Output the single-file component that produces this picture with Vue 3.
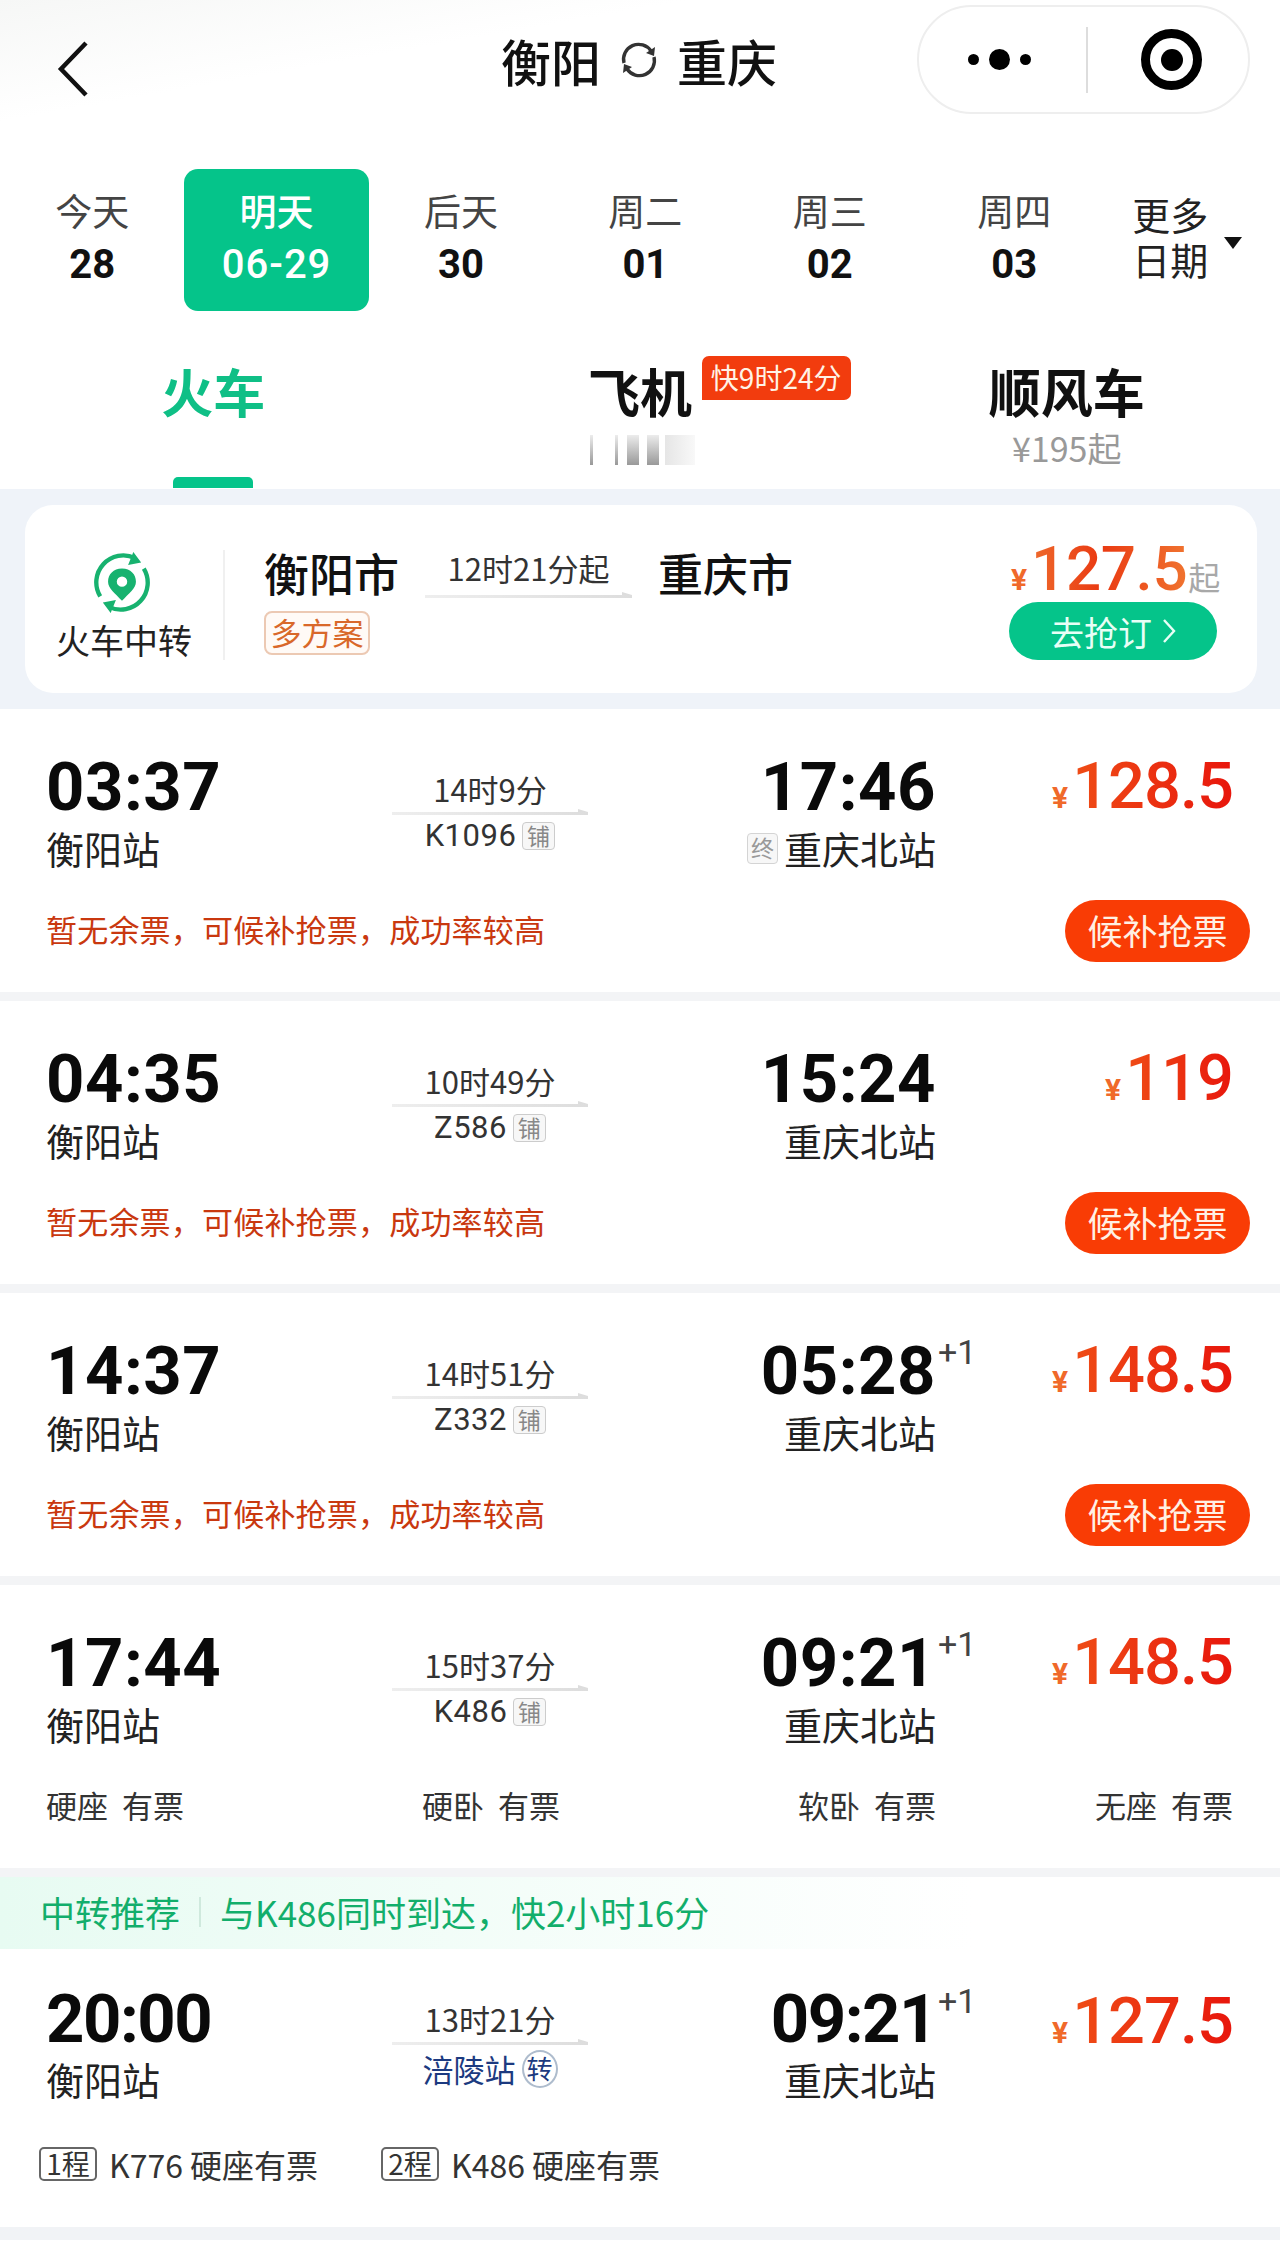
<template>
  <div class="page">
    <header class="nav">
      <svg class="back" width="36" height="58" viewBox="0 0 36 58">
        <path d="M31 3 L6 29 L31 55" fill="none" stroke="#111" stroke-width="4.5" />
      </svg>
      <div class="title">
        <span>衡阳</span>
        <svg width="40" height="40" viewBox="0 0 40 40">
          <path d="M5 23 A15 15 0 0 1 32 11" fill="none" stroke="#333" stroke-width="3.4" />
          <path d="M35 17 A15 15 0 0 1 8 29" fill="none" stroke="#333" stroke-width="3.4" />
          <path d="M36 7 L35 16 L27 13 Z M4 33 L5 24 L13 27 Z" fill="#333" />
        </svg>
        <span>重庆</span>
      </div>
      <div class="capsule">
        <div class="capsule-part dots">
          <i class="dot"></i><i class="dot big"></i><i class="dot"></i>
        </div>
        <div class="capsule-line"></div>
        <div class="capsule-part">
          <div class="target"><i></i></div>
        </div>
      </div>
    </header>

    <section class="dates">
      <div v-for="d in dates" :key="d.label" class="date" :class="{ active: d.active }">
        <div class="date-label">{{ d.label }}</div>
        <div class="date-num">{{ d.num }}</div>
      </div>
      <div class="more">
        <div>更多<br />日期</div>
        <i class="caret"></i>
      </div>
    </section>

    <nav class="tabs">
      <div class="tab tab-on">
        <div class="tab-name">火车</div>
      </div>
      <div class="tab">
        <div class="tab-name plane">
          飞机
          <span class="flag">快9时24分</span>
        </div>
        <div class="smear">
          <i v-for="(b, i) in smear" :key="i" :style="{ width: b.w + 'px', marginLeft: b.gap + 'px' }"></i>
        </div>
      </div>
      <div class="tab">
        <div class="tab-name">顺风车</div>
        <div class="tab-sub">¥195起</div>
      </div>
    </nav>

    <div class="band">
      <div class="transfer">
        <div class="transfer-kind">
          <svg width="68" height="70" viewBox="0 0 68 70">
            <path d="M9 51 A31 31 0 0 1 49 7" fill="none" stroke="#17b26f" stroke-width="5" />
            <path d="M59 19 A31 31 0 0 1 19 63" fill="none" stroke="#17b26f" stroke-width="5" />
            <path d="M47 0 L56 12 L41 15 Z M21 70 L12 58 L27 55 Z" fill="#17b26f" />
            <path fill-rule="evenodd" fill="#17b26f" d="M34 19 C24 19 18 26 18 34 C18 42 26 47 34 56 C42 47 50 42 50 34 C50 26 44 19 34 19 Z M34 28 A6 6 0 1 0 34 40 A6 6 0 1 0 34 28 Z" />
          </svg>
          <div class="kind-name">火车中转</div>
        </div>
        <div class="transfer-main">
          <div class="transfer-route">
            <span class="city">衡阳市</span>
            <div class="span-box">
              <div class="span-time">12时21分起</div>
              <div class="arrow-line"></div>
            </div>
            <span class="city">重庆市</span>
          </div>
          <span class="plans">多方案</span>
        </div>
        <div class="transfer-side">
          <div class="transfer-price">
            <span class="yen">¥</span><span class="big-price">127.5</span><span class="from">起</span>
          </div>
          <div class="go-btn">
            去抢订
            <svg width="14" height="26" viewBox="0 0 14 26">
              <path d="M2 2 L12 13 L2 24" fill="none" stroke="#e8fff6" stroke-width="2.4" />
            </svg>
          </div>
        </div>
      </div>
    </div>

    <article v-for="t in trains" :key="t.code" class="train">
      <div class="train-top">
        <div class="col-dep">
          <div class="time">{{ t.dep }}</div>
          <div class="station">衡阳站</div>
        </div>
        <div class="col-mid">
          <div class="dur">{{ t.dur }}</div>
          <div class="arrow-line"></div>
          <div class="code">{{ t.code }}<span class="berth">铺</span></div>
        </div>
        <div class="col-arr">
          <div class="time">{{ t.arr }}<span v-if="t.next" class="plus">+1</span></div>
          <div class="station"><span v-if="t.last" class="end">终</span>重庆北站</div>
        </div>
        <div class="col-price">
          <span class="yen">¥</span><span class="price">{{ t.price }}</span>
        </div>
      </div>
      <div v-if="t.seats" class="seats">
        <span v-for="s in t.seats" :key="s">{{ s }}&nbsp; 有票</span>
      </div>
      <div v-else class="wait">
        <span class="wait-text">暂无余票，可候补抢票，成功率较高</span>
        <span class="wait-btn">候补抢票</span>
      </div>
    </article>

    <div class="hint">
      <span>中转推荐</span>
      <i></i>
      <span>与K486同时到达，快2小时16分</span>
    </div>

    <article class="train last-train">
      <div class="train-top">
        <div class="col-dep">
          <div class="time">20:00</div>
          <div class="station">衡阳站</div>
        </div>
        <div class="col-mid">
          <div class="dur">13时21分</div>
          <div class="arrow-line"></div>
          <div class="via">涪陵站<span class="via-tag">转</span></div>
        </div>
        <div class="col-arr">
          <div class="time">09:21<span class="plus">+1</span></div>
          <div class="station">重庆北站</div>
        </div>
        <div class="col-price">
          <span class="yen">¥</span><span class="price">127.5</span>
        </div>
      </div>
      <div class="legs">
        <div v-for="l in legs" :key="l.tag" class="leg">
          <span class="leg-tag">{{ l.tag }}</span>
          <span>{{ l.text }}</span>
        </div>
      </div>
    </article>
    <div class="foot"></div>
  </div>
</template>

<script setup>
const dates = [
  { label: '今天', num: '28' },
  { label: '明天', num: '06-29', active: true },
  { label: '后天', num: '30' },
  { label: '周二', num: '01' },
  { label: '周三', num: '02' },
  { label: '周四', num: '03' },
];

// blurred price under the plane tab
const smear = [
  { w: 3, gap: 0 },
  { w: 3, gap: 22 },
  { w: 12, gap: 9 },
  { w: 12, gap: 8 },
  { w: 30, gap: 6 },
];

const trains = [
  { dep: '03:37', arr: '17:46', dur: '14时9分', code: 'K1096', price: '128.5', last: true },
  { dep: '04:35', arr: '15:24', dur: '10时49分', code: 'Z586', price: '119' },
  { dep: '14:37', arr: '05:28', dur: '14时51分', code: 'Z332', price: '148.5', next: true },
  {
    dep: '17:44',
    arr: '09:21',
    dur: '15时37分',
    code: 'K486',
    price: '148.5',
    next: true,
    seats: ['硬座', '硬卧', '软卧', '无座'],
  },
];

const legs = [
  { tag: '1程', text: 'K776 硬座有票' },
  { tag: '2程', text: 'K486 硬座有票' },
];
</script>

<style>
body {
  background: #fff;
}
</style>

<style scoped>
.page {
  width: 1280px;
  height: 2248px;
  overflow: hidden;
  background: #fff;
  color: #111;
  font-family: "Noto Sans CJK SC", "Noto Sans", sans-serif;
}

.nav {
  height: 169px;
  padding: 5px 30px 0 55px;
  box-sizing: border-box;
  display: flex;
  align-items: flex-start;
  background: linear-gradient(170deg, #f6f7f6 0, #fff 120px);
}

.back {
  margin-top: 35px;
  flex: none;
}

.title {
  flex: none;
  margin-left: 410px;
  height: 110px;
  display: flex;
  align-items: center;
  gap: 18px;
  font-size: 50px;
  font-weight: 500;
  white-space: nowrap;
}

.capsule {
  width: 333px;
  height: 109px;
  margin-left: auto;
  flex: none;
  box-sizing: border-box;
  border: 2px solid #eee;
  border-radius: 55px;
  background: #fff;
  display: flex;
  align-items: center;
}

.capsule-part {
  flex: 1;
  display: flex;
  align-items: center;
  justify-content: center;
  gap: 10px;
}

.dots {
  padding-right: 6px;
}

.capsule-line {
  width: 2px;
  height: 66px;
  background: #ddd;
}

.dot {
  width: 11px;
  height: 11px;
  border-radius: 50%;
  background: #000;
}

.dot.big {
  width: 21px;
  height: 21px;
}

.target {
  width: 61px;
  height: 61px;
  margin-left: 8px;
  box-sizing: border-box;
  border: 9px solid #000;
  border-radius: 50%;
  display: flex;
  align-items: center;
  justify-content: center;
}

.target i {
  width: 22px;
  height: 22px;
  border-radius: 50%;
  background: #000;
}

.dates {
  display: flex;
  height: 142px;
}

.date {
  width: 184.4px;
  flex: none;
  box-sizing: border-box;
  padding-top: 19px;
  text-align: center;
  border-radius: 14px;
}

.date.active {
  background: #05c48a;
  color: #fff;
}

.date-label {
  font-size: 37px;
  line-height: 44px;
  color: #444;
}

.date.active .date-label {
  color: #fff;
  font-weight: 500;
}

.date-num {
  margin-top: 10px;
  font-family: Roboto, sans-serif;
  font-size: 40px;
  line-height: 46px;
  font-weight: 700;
}

.date.active .date-num {
  letter-spacing: 1px;
  font-weight: 500;
}

.more {
  position: relative;
  padding: 22px 0 0 26px;
  font-size: 38px;
  line-height: 45px;
  color: #222;
}

.caret {
  position: absolute;
  left: 118px;
  top: 68px;
  border-left: 9px solid transparent;
  border-right: 9px solid transparent;
  border-top: 12px solid #111;
}

.tabs {
  display: grid;
  grid-template-columns: repeat(3, 1fr);
  height: 178px;
  box-sizing: border-box;
  padding-top: 53px;
}

.tab {
  position: relative;
  text-align: center;
}

.tab-name {
  font-size: 52px;
  line-height: 54px;
  font-weight: 700;
}

.tab-on .tab-name {
  color: #0fbf86;
}

.tab-on::after {
  content: "";
  position: absolute;
  left: 173px;
  top: 113px;
  width: 80px;
  height: 11px;
  border-radius: 5px 5px 0 0;
  background: #05c48a;
}

.plane {
  position: relative;
}

.flag {
  position: absolute;
  left: 275px;
  top: -8px;
  width: 149px;
  height: 44px;
  border-radius: 7px 7px 7px 0;
  background: #f23c0e;
  color: #fff3e6;
  font-size: 28px;
  line-height: 43px;
  font-weight: 400;
  white-space: nowrap;
}

.smear {
  margin: 17px 0 0 163px;
  height: 30px;
  display: flex;
}

.smear i {
  background: linear-gradient(#e6e6e6, #777);
  opacity: 0.75;
}

.smear i:last-child {
  background: linear-gradient(90deg, #ddd, #f6f6f6);
}

.tab-sub {
  margin-top: 12px;
  font-size: 34px;
  line-height: 36px;
  color: #999;
}

.band {
  height: 220px;
  padding: 16px 23px 16px 25px;
  box-sizing: border-box;
  background: #eff3f9;
}

.transfer {
  height: 188px;
  display: flex;
  background: #fff;
  border-radius: 28px;
  position: relative;
}

.transfer-kind {
  width: 200px;
  height: 110px;
  margin-top: 45px;
  flex: none;
  box-sizing: border-box;
  border-right: 2px solid #f0f0f0;
  display: flex;
  flex-direction: column;
  align-items: center;
}

.transfer-kind svg {
  margin: 2px 0 0 -5px;
}

.kind-name {
  margin-top: 7px;
  width: 136px;
  font-size: 34px;
  line-height: 40px;
  white-space: nowrap;
  color: #222;
}

.transfer-main {
  padding: 42px 0 0 39px;
  flex: 1;
}

.transfer-route {
  display: flex;
  align-items: flex-start;
}

.city {
  font-size: 45px;
  line-height: 52px;
  font-weight: 500;
  white-space: nowrap;
}

.span-box {
  width: 207px;
  margin: 0 26px 0 26px;
  text-align: center;
  flex: none;
}

.span-time {
  font-size: 31px;
  line-height: 42px;
  color: #333;
}

.arrow-line {
  position: relative;
  height: 3px;
  margin-top: 3px;
  background: linear-gradient(90deg, #eee, #ddd);
}

.arrow-line::after {
  content: "";
  position: absolute;
  right: 0;
  top: -3px;
  border-left: 10px solid #ddd;
  border-top: 3px solid transparent;
}

.span-box .arrow-line {
  margin-top: 6px;
}

.plans {
  display: inline-block;
  margin-top: 12px;
  width: 106px;
  height: 44px;
  box-sizing: border-box;
  border: 2px solid #ecc9b3;
  border-radius: 8px;
  background: #fffaf6;
  color: #d9682a;
  font-size: 31px;
  line-height: 38px;
  text-align: center;
  white-space: nowrap;
}

.transfer-side {
  position: absolute;
  right: 40px;
  top: 0;
  width: 208px;
}

.transfer-price {
  height: 97px;
  display: flex;
  align-items: baseline;
  padding: 30px 0 0 2px;
  box-sizing: border-box;
  white-space: nowrap;
}

.big-price {
  font-family: Roboto, sans-serif;
  font-size: 62px;
  line-height: 67px;
  font-weight: 500;
  letter-spacing: -0.4px;
  color: transparent;
  background: linear-gradient(90deg, #ee6a2c, #ea3a12 45%, #f0732f);
  -webkit-background-clip: text;
  background-clip: text;
}

.from {
  margin-left: 1px;
  font-size: 32px;
  color: #a8a8a8;
}

.yen {
  margin-right: 4px;
  font-family: Roboto, sans-serif;
  font-size: 30px;
  font-weight: 700;
  color: #f0692a;
}

.go-btn {
  height: 58px;
  border-radius: 29px;
  background: #05c48a;
  color: #e8fff6;
  font-size: 34px;
  display: flex;
  align-items: center;
  justify-content: center;
  gap: 10px;
}

.train {
  height: 283px;
  margin-bottom: 9px;
  padding: 40px 47px 0 46px;
  box-sizing: border-box;
  background: #fff;
  box-shadow: 0 9px 0 #f3f4f6;
}

.train-top {
  display: grid;
  grid-template-columns: 346px 196px 348px 1fr;
  height: 129px;
}

.time {
  position: relative;
  padding-top: 1px;
  font-family: Roboto, sans-serif;
  font-size: 67px;
  line-height: 74px;
  font-weight: 700;
  letter-spacing: 0.5px;
  color: #0a0a0a;
}

.station {
  font-size: 38px;
  line-height: 48px;
  color: #222;
  display: flex;
  align-items: center;
}

.col-arr {
  text-align: right;
}

.col-arr .station {
  justify-content: flex-end;
}

.plus {
  position: absolute;
  left: 100%;
  top: 1px;
  margin-left: 2px;
  font-family: Roboto, sans-serif;
  font-size: 34px;
  line-height: 36px;
  font-weight: 400;
  letter-spacing: 0;
  color: #444;
}

.end {
  width: 31px;
  height: 31px;
  margin-right: 6px;
  box-sizing: border-box;
  border: 1.5px solid #d4d4d4;
  border-radius: 4px;
  font-size: 23px;
  line-height: 27px;
  text-align: center;
  color: #999;
  background: #f7f7f7;
}

.col-mid {
  text-align: center;
  padding-top: 20px;
}

.dur {
  font-size: 31px;
  line-height: 40px;
  color: #333;
  white-space: nowrap;
}

.code {
  margin-top: 3px;
  font-family: Roboto, sans-serif;
  font-size: 31px;
  line-height: 36px;
  color: #333;
  display: flex;
  justify-content: center;
  align-items: center;
  letter-spacing: 0.5px;
}

.berth {
  width: 33px;
  height: 28px;
  margin-left: 6px;
  box-sizing: border-box;
  border: 1.5px solid #ccc;
  border-radius: 4px;
  background: #f7f7f7;
  font-family: "Noto Sans CJK SC", sans-serif;
  font-size: 23px;
  line-height: 24px;
  color: #888;
}

.col-price {
  text-align: right;
  white-space: nowrap;
}

.price {
  font-family: Roboto, sans-serif;
  font-size: 65px;
  line-height: 74px;
  font-weight: 500;
  letter-spacing: -1px;
  color: transparent;
  background: linear-gradient(90deg, #ef4d16, #e8160c);
  -webkit-background-clip: text;
  background-clip: text;
}

.wait {
  display: flex;
  align-items: center;
  justify-content: space-between;
  margin: 22px -17px 0 0;
}

.wait-text {
  padding-bottom: 5px;
  font-size: 31px;
  letter-spacing: 0.2px;
  color: #c9380f;
  white-space: nowrap;
}

.wait-btn {
  width: 185px;
  height: 62px;
  border-radius: 31px;
  background: #f93c05;
  color: #fff0e4;
  font-size: 35px;
  line-height: 59px;
  text-align: center;
  white-space: nowrap;
}

.seats {
  display: grid;
  grid-template-columns: 376px 376px 1fr auto;
  margin-top: 28px;
  font-size: 31px;
  color: #333;
  white-space: nowrap;
}

.hint {
  height: 72px;
  padding: 0 0 3px 40px;
  box-sizing: border-box;
  display: flex;
  align-items: center;
  background: linear-gradient(90deg, #e7fbf2, #fff 76%);
  color: #12ae6b;
  font-size: 35px;
  white-space: nowrap;
}

.hint i {
  width: 2px;
  height: 30px;
  margin: 0 19px;
  background: #cfe9dd;
}

.last-train {
  height: 278px;
  margin-bottom: 0;
  padding-top: 35px;
  box-shadow: none;
}

.last-train .train-top {
  height: 135px;
}

.last-train .time {
  height: 71px;
  padding-top: 0;
  line-height: 71px;
  letter-spacing: -1.5px;
}

.last-train .plus {
  top: -1px;
}

.last-train .col-mid {
  padding-top: 15px;
}

.via {
  margin-top: 4px;
  font-size: 31px;
  line-height: 40px;
  color: #1c3a80;
  display: flex;
  justify-content: center;
  align-items: center;
}

.via-tag {
  width: 36px;
  height: 38px;
  margin-left: 6px;
  box-sizing: border-box;
  border: 2px solid #aebccd;
  border-radius: 50%;
  font-size: 26px;
  line-height: 32px;
}

.legs {
  display: flex;
  margin: 22px 0 0 -7px;
  font-size: 32px;
  color: #333;
}

.leg {
  width: 342px;
  display: flex;
  align-items: center;
  gap: 12px;
  white-space: nowrap;
}

.leg-tag {
  width: 58px;
  height: 34px;
  box-sizing: border-box;
  border: 2px solid #666;
  border-radius: 5px;
  font-size: 28px;
  line-height: 29px;
  text-align: center;
}

.foot {
  height: 13px;
  background: #f1f3f6;
}
</style>
